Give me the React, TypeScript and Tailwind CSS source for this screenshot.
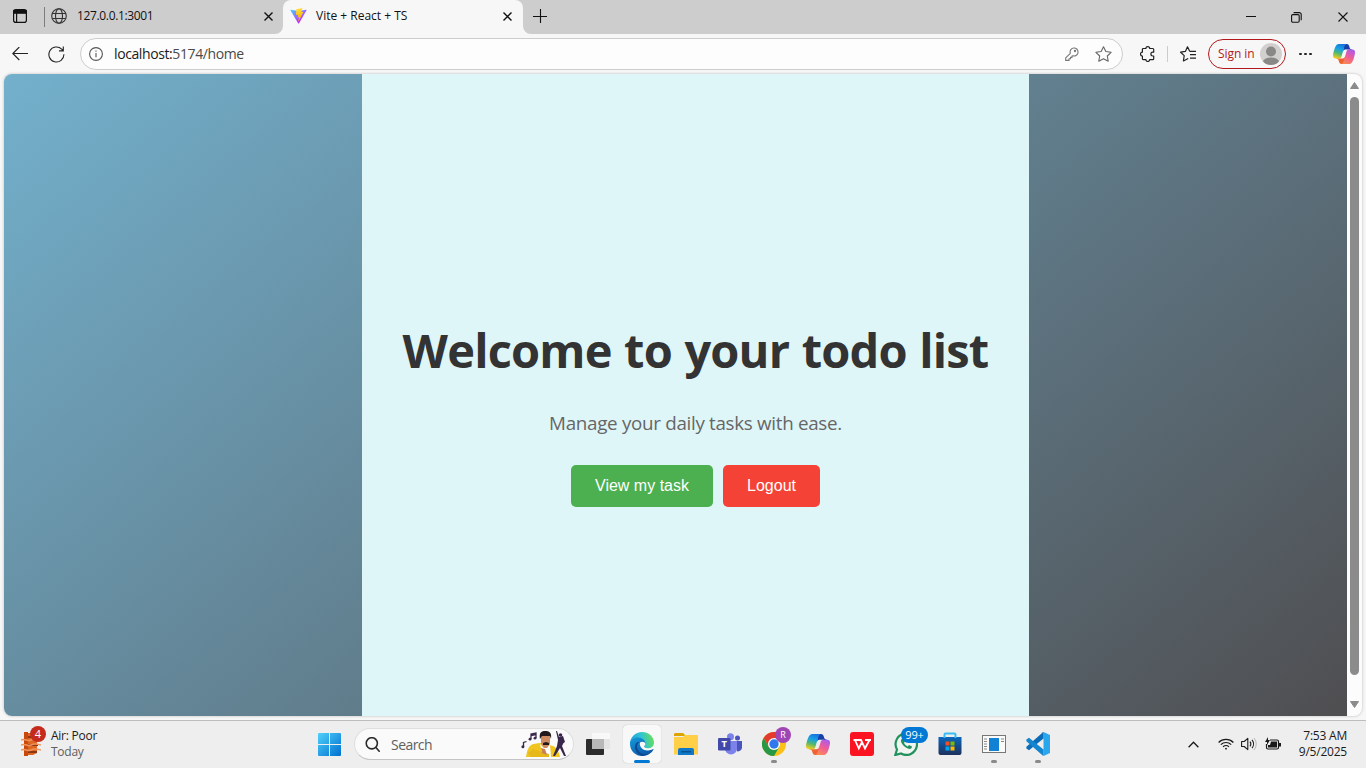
import React from "react";

const CopilotIcon = ({ w, h, id }: { w: number; h: number; id: string }) => (
  <svg width={w} height={h} viewBox="0 0 24 22" preserveAspectRatio="none" className="block shrink-0">
    <defs>
      <linearGradient id={id + "a"} x1="0.6" y1="0" x2="0.3" y2="1">
        <stop offset="0" stopColor="#1b74dc" />
        <stop offset="0.35" stopColor="#18a0e8" />
        <stop offset="0.65" stopColor="#4fb871" />
        <stop offset="1" stopColor="#f5cb1c" />
      </linearGradient>
      <linearGradient id={id + "b"} x1="0.8" y1="0" x2="0.3" y2="1">
        <stop offset="0" stopColor="#a95bf0" />
        <stop offset="0.5" stopColor="#ee5d98" />
        <stop offset="1" stopColor="#fb8a55" />
      </linearGradient>
    </defs>
    <path d="M17.533 1.829A2.528 2.528 0 0 0 15.110 0h-.737a2.531 2.531 0 0 0-2.484 2.087l-1.263 6.937.314-1.080a2.528 2.528 0 0 1 2.424-1.833h4.284l1.797.706 1.731-.706h-.505a2.528 2.528 0 0 1-2.423-1.829l-.715-2.453z" fill="#1740a8" />
    <path d="M6.726 20.160A2.528 2.528 0 0 0 9.152 22h1.566c1.370 0 2.490-1.100 2.525-2.480l.17-6.690-.357 1.228a2.528 2.528 0 0 1-2.423 1.830h-4.320l-1.540-.842-1.667.843h.497c1.124 0 2.113.75 2.426 1.840l.697 2.432z" fill="#f0622f" />
    <path d="M15 0H6.252c-2.500 0-4 3.331-5 6.662-1.184 3.947-2.734 9.225 1.750 9.225H6.780c1.130 0 2.120-.753 2.430-1.847.657-2.317 1.809-6.359 2.713-9.436.46-1.563.842-2.906 1.430-3.742A1.970 1.970 0 0 1 15 0" fill={`url(#${id}a)`} />
    <path d="M9 22h8.749c2.500 0 4-3.332 5-6.663 1.184-3.948 2.734-9.227-1.750-9.227H17.220c-1.129 0-2.120.754-2.430 1.848a1149 1149 0 0 1-2.713 9.437c-.46 1.564-.842 2.907-1.430 3.743A1.970 1.970 0 0 1 9 22" fill={`url(#${id}b)`} />
  </svg>
);

const CloseIcon = ({ size = 9, w = 1.4 }: { size?: number; w?: number }) => (
  <svg width={size} height={size} viewBox={`0 0 ${size} ${size}`} className="block shrink-0" stroke="#111" strokeWidth={w}>
    <path d={`M.5.5 ${size - 0.5} ${size - 0.5}M${size - 0.5}.5.5 ${size - 0.5}`} />
  </svg>
);

const ViteIcon = () => (
  <svg width="17" height="16" viewBox="0 0 410 404" preserveAspectRatio="none" className="block shrink-0">
    <defs>
      <linearGradient id="va" x1="6" y1="33" x2="235" y2="344" gradientUnits="userSpaceOnUse">
        <stop stopColor="#41D1FF" />
        <stop offset="1" stopColor="#BD34FE" />
      </linearGradient>
      <linearGradient id="vb" x1="194" y1="9" x2="236" y2="293" gradientUnits="userSpaceOnUse">
        <stop stopColor="#FFEA83" />
        <stop offset="0.083" stopColor="#FFDD35" />
        <stop offset="1" stopColor="#FFA800" />
      </linearGradient>
    </defs>
    <path d="m399.641 59.525-183.998 329.020c-3.799 6.793-13.559 6.833-17.415.073L10.582 59.556C6.380 52.190 12.680 43.267 21.028 44.759l184.195 32.923c1.175.21 2.378.208 3.553-.006l180.343-32.870c8.320-1.517 14.649 7.337 10.522 14.719Z" fill="url(#va)" />
    <path d="M292.965 1.574 156.801 28.255a5 5 0 0 0-4.030 4.611l-8.376 141.464c-.197 3.332 2.863 5.918 6.115 5.168l37.910-8.749c3.547-.818 6.752 2.306 6.023 5.873l-11.263 55.153c-.758 3.712 2.727 6.886 6.352 5.785l23.415-7.114c3.630-1.102 7.118 2.081 6.350 5.796l-17.899 86.633c-1.120 5.419 6.088 8.374 9.094 3.728l2.008-3.103 110.954-221.428c1.858-3.707-1.346-7.935-5.418-7.150l-39.022 7.532c-3.667.707-6.787-2.708-5.752-6.296l25.469-88.291c1.036-3.594-2.095-7.012-5.766-6.293Z" fill="url(#vb)" />
  </svg>
);

const TitleBar = () => (
  <header className="flex h-[34px] bg-[#f7f7f7]">
    <div className="flex w-[283px] items-center rounded-br-[8px] bg-[#cdcdcd] pb-[2px]">
      <svg width="14" height="14" viewBox="0 0 14 14" className="ml-[13px] block shrink-0" fill="none" stroke="#111" strokeWidth="1.2">
        <rect x=".6" y=".6" width="12.800" height="12.800" rx="2.200" />
        <path d="M.8 1.600h12.400v2.600H.8z" fill="#111" />
        <path d="M3.600 4v9.400" />
      </svg>
      <div className="mt-[2px] ml-[17px] h-5 w-px bg-[#7d7d7d]" />
      <svg width="16" height="16" viewBox="0 0 16 16" className="ml-[6px] block shrink-0" fill="none" stroke="#333" strokeWidth="1.100">
        <circle cx="8" cy="8" r="7.300" />
        <ellipse cx="8" cy="8" rx="3.500" ry="7.300" />
        <path d="M1.300 5.500h13.400M1.300 10.500h13.400" />
      </svg>
      <span className="ml-[10px] w-[187px] text-[12px] leading-4 tracking-[-0.350px] text-[#111]">127.0.0.1:3001</span>
      <div><CloseIcon /></div>
    </div>
    <div className="w-[240px] bg-[#cdcdcd]">
      <div className="flex h-full items-center rounded-t-[8px] bg-[#f7f7f7] pb-[2px]">
        <div className="ml-[7px]"><ViteIcon /></div>
        <span className="ml-[9px] w-[187px] text-[12px] leading-4 tracking-[0px] text-[#111]">Vite + React + TS</span>
        <div><CloseIcon /></div>
      </div>
    </div>
    <div className="flex flex-1 items-center rounded-bl-[8px] bg-[#cdcdcd]">
      <svg width="14" height="14" viewBox="0 0 14 14" className="mb-[3px] ml-[10px] block" stroke="#111" strokeWidth="1.100">
        <path d="M7.500 0v14M0 7.500h14" />
      </svg>
      <div className="ml-auto flex items-center pr-[18px]">
        <div className="mr-[35px] mb-px h-px w-[10px] bg-[#111]" />
        <svg width="11" height="11" viewBox="0 0 11 11" className="mr-[36px] block" fill="none" stroke="#111" strokeWidth="1.100">
          <rect x=".6" y="2.600" width="7.600" height="7.600" rx="1.200" />
          <path d="M2.600.6h5.600a2 2 0 0 1 2 2v5.600" />
        </svg>
        <CloseIcon size={10} w={1.1} />
      </div>
    </div>
  </header>
);

const Toolbar = () => (
  <div className="flex h-[40px] items-center bg-[#f7f7f7]">
    <svg width="16" height="14" viewBox="0 0 16 14" className="ml-3 block shrink-0" fill="none" stroke="#222" strokeWidth="1.100">
      <path d="M16 6.500H.8M7.300 0 .8 6.500 7.300 13" />
    </svg>
    <svg width="17" height="17" viewBox="0 0 17 17" className="ml-[20px] block shrink-0" fill="none" stroke="#222" strokeWidth="1.100">
      <path d="M15.900 8.300A7.500 7.500 0 1 1 13.700 3.200L15 4.600M15.300.6v4.300H11" />
    </svg>
    <div className="ml-[15px] flex h-8 w-[1043px] items-center rounded-full border border-[#cdcdcd] bg-[#fdfdfd]">
      <svg width="14" height="14" viewBox="0 0 14 14" className="ml-2 block shrink-0" fill="none" stroke="#555" strokeWidth="1.100">
        <circle cx="7" cy="7" r="6.400" />
        <path d="M7 6v4.200M7 3.500v1.300" />
      </svg>
      <span className="ml-[11px] flex-1 text-[14px] leading-5 tracking-[-0.400px] text-[#1a1a1a]">
        localhost:<span className="text-[#4a4a4a]">5174/home</span>
      </span>
      <svg width="14" height="14" viewBox="0 0 14 14" className="mr-[16px] block" fill="none" stroke="#777" strokeWidth="1.100">
        <path d="M5.300 6.300A4 4 0 1 1 8 8.800l-1 .2v1.400H5.500v1.400H4v1.600H.7v-2.600Z" strokeLinejoin="round" />
        <circle cx="10" cy="4" r=".6" fill="#777" />
      </svg>
      <svg width="17" height="16" viewBox="0 0 17 16" className="mr-[10px] block" fill="none" stroke="#666" strokeWidth="1.100" strokeLinejoin="round">
        <path d="m8.500.8 2.350 4.750 5.250.75-3.800 3.700.9 5.200-4.700-2.450L3.800 15.200l.9-5.200L.9 6.300l5.250-.75Z" />
      </svg>
    </div>
    <svg width="15" height="16" viewBox="0 0 15 16" className="ml-[17px] block shrink-0" fill="none" stroke="#222" strokeWidth="1.200" strokeLinejoin="round">
      <path d="M3.300 2.500h2.600a1.900 1.900 0 0 1 3.800 0h3.100c.6 0 .9.300.9.900v2.800h-.9a1.900 1.900 0 0 0 0 3.800h.9v2.700c0 .6-.3.900-.9.900H9.700a1.900 1.900 0 0 1-3.800 0H3.300c-.6 0-.9-.3-.9-.9V10a1.900 1.900 0 0 1 0-3.800V3.400c0-.6.300-.9.900-.9Z" />
    </svg>
    <div className="ml-[12px] h-4 w-px bg-[#ccc]" />
    <svg width="17" height="16" viewBox="0 0 17 16" className="ml-[12px] block shrink-0" fill="none" stroke="#222" strokeWidth="1.200" strokeLinejoin="round">
      <path d="M9.700 5.300 7.500.8 5.500 5.300.6 6.200 4.200 9.600 3.400 15l4.800-2.500M9.700 5.300H16M10 8.700h6M10 12.200h6" />
    </svg>
    <div className="ml-[11px] flex h-[30px] w-[78px] items-center justify-between rounded-full border border-[#b3191c] pr-[3px] pl-[9px]">
      <span className="text-[12px] whitespace-nowrap tracking-[-0.050px] text-[#b3191c]">Sign in</span>
      <svg width="22" height="22" viewBox="0 0 22 22" className="block">
        <clipPath id="ac"><circle cx="11" cy="11" r="11" /></clipPath>
        <g clipPath="url(#ac)">
          <rect width="22" height="22" fill="#d2d0ce" />
          <circle cx="11" cy="8.500" r="5" fill="#8a8886" />
          <ellipse cx="11" cy="19" rx="8" ry="4.500" fill="#8a8886" />
        </g>
      </svg>
    </div>
    <div className="ml-[13px] flex gap-[2.5px]">
      <i className="size-[2.7px] rounded-full bg-[#222]" />
      <i className="size-[2.7px] rounded-full bg-[#222]" />
      <i className="size-[2.7px] rounded-full bg-[#222]" />
    </div>
    <div className="ml-[20.5px]"><CopilotIcon w={22} h={20} id="ct" /></div>
  </div>
);

const Page = () => (
  <main className="mx-1 flex h-[642px] w-[1358px] overflow-hidden rounded-[8px] bg-[#fcfcfc] shadow-[0_0_3px_rgba(0,0,0,0.25)]">
    <div className="flex w-[1343px] bg-[linear-gradient(140deg,#73b0cc_0%,#4e4c4e_102%)] pl-[358px]">
      <section className="flex w-[667px] flex-col items-center bg-[#dff6f9] pt-[244px]">
        <h1 className="text-[47px] leading-[64px] font-bold whitespace-nowrap tracking-[-0.800px] [word-spacing:1px] text-[#333]">Welcome to your todo list</h1>
        <p className="mt-[28px] text-[18.800px] leading-[26px] whitespace-nowrap tracking-[-0.300px] text-[#666]">Manage your daily tasks with ease.</p>
        <div className="mt-[29px] flex gap-[10px] font-['Liberation_Sans',sans-serif] text-[16px] text-white">
          <button className="h-[42px] w-[142px] rounded-[5px] bg-[#4caf50]">View my task</button>
          <button className="h-[42px] w-[97px] rounded-[5px] bg-[#f44336]">Logout</button>
        </div>
      </section>
    </div>
    <div className="flex w-[15px] flex-col items-center pt-[8px]">
      <svg width="9" height="8" viewBox="0 0 9 8" className="block"><path d="M4.500.5 8.500 6.500h-8Z" fill="#8b8b8b" stroke="#8b8b8b" strokeLinejoin="round" /></svg>
      <div className="mt-[7px] h-[578px] w-[9px] rounded-full bg-[#8b8b8b]" />
      <svg width="9" height="8" viewBox="0 0 9 8" className="mt-[25px] block"><path d="M4.500 7.500 8.500 1.500h-8Z" fill="#8b8b8b" stroke="#8b8b8b" strokeLinejoin="round" /></svg>
    </div>
  </main>
);

const Cell = ({ children, active, running }: { children: React.ReactNode; active?: boolean; running?: boolean }) => (
  <div className="flex w-[44px] justify-center">
    <div className={"relative flex size-[38px] items-center justify-center rounded-[4px] " + (active ? "bg-[#f8f8f8] shadow-[0_0_1px_rgba(0,0,0,0.3)]" : "")}>
      {children}
      {active && <div className="absolute bottom-0 h-[3px] w-4 rounded-full bg-[#0078d4]" />}
      {running && <div className="absolute bottom-0 h-[3px] w-[6px] rounded-full bg-[#8a8a8a]" />}
    </div>
  </div>
);

const SearchArt = () => (
  <svg width="46" height="28" viewBox="0 0 46 28" className="block">
    <path d="M10 9V4l5-1v5M10 5.500l5-1M2.500 16.500v-4l3-1" fill="none" stroke="#3b2a4d" strokeWidth="1.300" />
    <circle cx="9" cy="9.200" r="1.400" fill="#3b2a4d" /><circle cx="14" cy="8.200" r="1.400" fill="#3b2a4d" /><circle cx="1.900" cy="16.800" r="1.500" fill="#3b2a4d" />
    <path d="M5 27c1-6 2-11 7-13l7-1 5 1 8 2c4 2 6 6 7 11Z" fill="#f0c51f" />
    <path d="m19 14 4 4 6-3 1 12h-8Z" fill="#fff" />
    <path d="m7 23 5-4 9 3 7 2v3H10Z" fill="#e6b81a" />
    <path d="m20 18 4 1 2 6-5-2Z" fill="#c98258" />
    <path d="M20 5h9v9l-3 4h-3l-3-4Z" fill="#cf8a60" />
    <path d="M19 9c-1-6 1-8 5-8s7 1 6 8l-1-3h-8Zm3 4 3-1 3 1v2h-6Z" fill="#21191b" />
    <path d="m35 1 1 0 2 6 4-1 2 6-1.500 1-1.500 3 4 10h-2l-4-8-5 8h-2l4-10 1-6Z" fill="#38274b" />
    <circle cx="39.500" cy="5" r="1.800" fill="#38274b" />
  </svg>
);

const EdgeIcon = () => (
  <svg width="24" height="24" viewBox="0 0 24 24">
    <defs>
      <linearGradient id="ea" x1="0" y1="0.500" x2="1" y2="0.300"><stop stopColor="#229bd9" /><stop offset=".5" stopColor="#2fc4d5" /><stop offset="1" stopColor="#68df55" /></linearGradient>
      <linearGradient id="eb" x1="0" y1="0" x2="0.700" y2="1"><stop stopColor="#159bdb" /><stop offset="1" stopColor="#0c55a5" /></linearGradient>
    </defs>
    <path d="M0 12C0 5 5.500 0 12 0s12 4.700 12 10.500c0 3.500-2.600 5.900-6 5.900-2.500 0-4-.8-4-1.900L9 20Z" fill="url(#ea)" />
    <path d="M0 11.500C.5 7.500 4 5.300 8 5.500c4.500.2 7.500 3 7.500 6.500 0 1.400-1.500 2-1.300 3.300.5 2.400 4.800 3.700 8.700 1.700.5-.2.8.2.600.6C21.500 21.500 17 24 12 24 5.500 24-.2 18.500 0 11.500Z" fill="url(#eb)" />
    <path d="M9.500 10C7 11.500 6.300 15 8 18c2.200 4 7 5.500 11.500 3.300C17 23.300 14.500 24 12 24 7.500 22.500 4.500 18 5 14c.4-2.700 2-4.500 4.500-4Z" fill="#0d4a93" />
    <path d="M10 10.500c2-1.500 5.200-.5 5.500 1.500 0 1.200-1.600 1.700-1.300 2.800.5 1.900 5 2.500 8.300.4l1 .8c-.2.700-.4 1.200-1 1.200-4.500 2-8 1.600-10.200-.4-1.800-1.600-3-4-2.300-6.300Z" fill="#f8f8f8" />
  </svg>
);

const TeamsIcon = () => (
  <svg width="24" height="22" viewBox="0 0 24 22">
    <circle cx="19.500" cy="5" r="2.500" fill="#4b53bc" /><path d="M16 8h8v6.500a4 4 0 0 1-5 3.800Z" fill="#4b53bc" />
    <circle cx="12.500" cy="3.700" r="3.500" fill="#7b83eb" /><path d="M7 8h12v7.500a6 6 0 0 1-12 0Z" fill="#7b83eb" />
    <rect y="5" width="12.500" height="12.500" rx="1.200" fill="#4149aa" />
    <text x="6.200" y="14.400" fontSize="9.500" fontWeight="700" fill="#fff" textAnchor="middle">T</text>
  </svg>
);

const ChromeIcon = () => (
  <svg width="24" height="24" viewBox="0 0 24 24">
    <circle cx="12" cy="12" r="12" fill="#fbc116" />
    <path d="M1.600 6A12 12 0 0 1 22.400 6H12v6l-5.200 3Z" fill="#e33b2e" />
    <path d="M1.600 6A12 12 0 0 0 12 24l5.200-9-5.200-3-5.200 3Z" fill="#269846" />
    <circle cx="12" cy="12" r="6" fill="#fff" /><circle cx="12" cy="12" r="4.700" fill="#3079ed" />
  </svg>
);

const Taskbar = () => (
  <footer className="flex h-[48px] items-center border-t border-[#bdbdbd] bg-[#eee] pb-[1px]">
    <div className="relative ml-[21px] h-6 w-[22px]">
      <svg width="20" height="24" viewBox="0 0 20 24" className="block">
        <path d="M3 0h4v24H3z" fill="#c9490c" /><path d="M7 1h9v20l-4 2H7Z" fill="#dd6722" />
        <path d="M7 5h10M7 13h10M7 20h9" stroke="#8d3515" strokeWidth="2" />
        <path d="M0 8c5-2 6 2 10 0s6-1 10 0M0 13c5-2 6 2 10 0s6-1 10 0M0 18c5-2 6 2 10 0s6-1 10 0" stroke="#f0925a" strokeWidth="1.500" fill="none" />
      </svg>
      <span className="absolute -top-[6px] left-[9px] flex size-4 items-center justify-center rounded-full bg-[#c42b1c] text-[11px] text-white">4</span>
    </div>
    <div className="ml-[8px] w-[267px] text-[12px] leading-4 tracking-[-0.250px] text-[#1b1b1b]">
      Air: Poor<br /><span className="text-[#606060]">Today</span>
    </div>
    <svg width="23" height="23" viewBox="0 0 23 23" className="block shrink-0">
      <defs><linearGradient id="wi" x1="0" y1="0" x2="1" y2="1"><stop stopColor="#4fd0fb" /><stop offset="1" stopColor="#0070cf" /></linearGradient></defs>
      <path d="M1 0h10v11H0V1a1 1 0 0 1 1-1ZM12 0h10a1 1 0 0 1 1 1v10H12ZM0 12h11v11H1a1 1 0 0 1-1-1ZM12 12h11v10a1 1 0 0 1-1 1H12Z" fill="url(#wi)" />
    </svg>
    <div className="ml-[13px] flex h-8 w-[220px] items-center rounded-full border border-[#dedede] border-b-[#c4c4c4] bg-[#fafafa]">
      <svg width="15" height="15" viewBox="0 0 15 15" className="ml-[10px] block" fill="none" stroke="#2b2b2b" strokeWidth="1.600" strokeLinecap="round">
        <circle cx="6.800" cy="6.300" r="5.600" /><path d="m10.900 10.500 3.300 3.700" />
      </svg>
      <span className="ml-[11px] flex-1 text-[14px] tracking-[-0.550px] text-[#606060]">Search</span>
      <div className="mr-[6px]"><SearchArt /></div>
    </div>
    <div className="ml-[2px] flex">
      <Cell>
        <svg width="24" height="22" viewBox="0 0 24 22"><rect y="6" width="18" height="16" rx="1" fill="#2c2c2c" /><rect x="6" width="18" height="16" rx="1" fill="#e4e4e4" /><rect x="6" width="18" height="6" fill="#f8f8f8" /><path d="M6 6h12v10H6z" fill="#b8b8b8" /></svg>
      </Cell>
      <Cell active><EdgeIcon /></Cell>
      <Cell>
        <svg width="24" height="22" viewBox="0 0 24 22"><path d="M1 0h8l3 3H0V1Z" fill="#dda400" /><path d="M0 4h9l2-2h12a1 1 0 0 1 1 1v18.500H0Z" fill="#ffcf48" /><path d="M4 22v-5a2 2 0 0 1 2-2h12a2 2 0 0 1 2 2v5Z" fill="#0f78c8" /><path d="M7 18h10v1.500H7z" fill="#095292" /></svg>
      </Cell>
      <Cell><TeamsIcon /></Cell>
      <Cell running>
        <ChromeIcon />
        <span className="absolute top-[2px] left-[20px] flex size-4 items-center justify-center rounded-full bg-[#a046b4] text-[9px] text-white">R</span>
      </Cell>
      <Cell><CopilotIcon w={24} h={21} id="cb" /></Cell>
      <Cell>
        <svg width="24" height="24" viewBox="0 0 24 24"><rect width="24" height="24" rx="3" fill="#fb1322" /><path d="M3.500 8H11l4 8.500L19.500 8M5 8l3.800 8.500L12 10M15 8h6" fill="none" stroke="#fff" strokeWidth="1.800" /></svg>
      </Cell>
      <Cell>
        <svg width="24" height="24" viewBox="0 0 24 24">
          <path d="M1.300 23 3 17.500A10.700 10.700 0 1 1 7 21.500Z" fill="#f1f5f2" stroke="#21915d" strokeWidth="2.200" />
          <path d="M8.500 6.500 7 7.800c-1 3 4.500 9 8.500 9.200 1.500 0 2.500-1 2.500-2.500L15 13l-1.300 1.400c-1.700-.7-3-2-3.700-3.600L11 9.500Z" fill="#21915d" />
        </svg>
        <span className="absolute top-[2px] left-[14px] flex h-4 w-[27px] items-center justify-center rounded-full bg-[#0078d4] text-[11px] tracking-[-0.200px] text-white">99+</span>
      </Cell>
      <Cell>
        <svg width="24" height="24" viewBox="0 0 24 24"><defs><linearGradient id="ms" x1="0" y1="0" x2="0" y2="1"><stop stopColor="#0a66bd" /><stop offset="1" stopColor="#1f315c" /></linearGradient></defs>
          <path d="M.5 5h23v16a2 2 0 0 1-2 2h-19a2 2 0 0 1-2-2Z" fill="url(#ms)" /><path d="M6.500 6V2.500a1 1 0 0 1 1-1h9a1 1 0 0 1 1 1V6" fill="none" stroke="#37bdf3" strokeWidth="2" />
          <path d="M7.500 9.500h4v4h-4z" fill="#f25022" /><path d="M12.500 9.500h4v4h-4z" fill="#7fba00" /><path d="M7.500 14.500h4v4h-4z" fill="#00a4ef" /><path d="M12.500 14.500h4v4h-4z" fill="#ffb900" /></svg>
      </Cell>
      <Cell running>
        <svg width="24" height="18" viewBox="0 0 24 18" className="block"><rect x=".5" y=".5" width="23" height="17" fill="#fafafa" stroke="#777" /><path d="M7 3h10v13H7z" fill="#1181d4" /><path d="M2 4h3M2 6.500h3M2 9h3M2 11.500h3M2 14h3M19 4h3M19 6.500h3" stroke="#888" /></svg>
      </Cell>
      <Cell running>
        <svg width="24" height="24" viewBox="0 0 24 24"><path d="m17.500 0 6.500 3v18l-6.500 3Z" fill="#2aa6ec" /><path d="M17.500 0v6.500L3 18.200.4 16.500v-1.700L17 .3Z" fill="#0b6db8" /><path d="M17.500 24v-6.500L3 5.800.4 7.500v1.700L17 23.700Z" fill="#1485cf" /></svg>
      </Cell>
    </div>
    <div className="ml-auto flex items-center">
      <svg width="11" height="7" viewBox="0 0 11 7" className="mr-[19px] block" fill="none" stroke="#1b1b1b" strokeWidth="1.300"><path d="M.6 6.200 5.500 1.200l4.900 5" /></svg>
      <svg width="16" height="12" viewBox="0 0 16 12" className="mr-[7px] block" fill="none" stroke="#1b1b1b" strokeWidth="1.200">
        <path d="M.6 4.500a10.300 10.300 0 0 1 14.800 0M2.800 6.700a7.300 7.300 0 0 1 10.400 0M5 8.900a4.300 4.300 0 0 1 6 0" /><circle cx="8" cy="10.700" r=".9" fill="#1b1b1b" stroke="none" />
      </svg>
      <svg width="17" height="14" viewBox="0 0 17 14" className="mr-[7px] block" fill="none" stroke="#1b1b1b" strokeWidth="1.100" strokeLinejoin="round">
        <path d="M.6 4.500h2.600L6.800 1.400v11.200L3.200 9.500H.6ZM9 4.700c1 1.300 1 3.300 0 4.600M11 2.800c2 2.400 2 6 0 8.400" /><path d="M13 1c3 3.500 3 8.500 0 12" stroke="#bbb" />
      </svg>
      <svg width="16" height="13" viewBox="0 0 16 13" className="mr-[16px] mb-px block">
        <path d="M5 3h7a1.500 1.500 0 0 1 1.500 1.500v6A1.500 1.500 0 0 1 12 12H3a1.500 1.500 0 0 1-1.500-1.500V7" fill="none" stroke="#1b1b1b" strokeWidth="1.200" /><path d="M6 4.500h6v6H3V8h2ZM14 6h2v3.500h-2ZM3 0 0 5h2v3l3-5H3Z" fill="#1b1b1b" />
      </svg>
      <div className="mr-[19px] w-[50px] text-right text-[12px] leading-4 tracking-[-0.220px] whitespace-nowrap text-[#1b1b1b]">7:53 AM<br />9/5/2025</div>
    </div>
  </footer>
);

export default function App() {
  return (
    <div className="flex h-[768px] w-[1366px] flex-col overflow-hidden bg-[#f7f7f7] font-['Open_Sans','Noto_Sans',sans-serif]">
      <TitleBar />
      <Toolbar />
      <Page />
      <div className="h-[4px]" />
      <Taskbar />
    </div>
  );
}
